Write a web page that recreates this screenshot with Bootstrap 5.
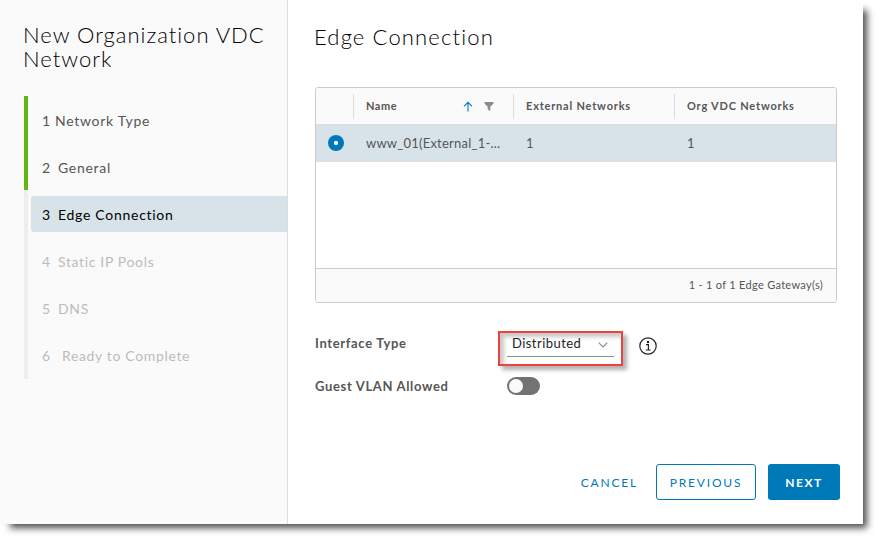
<!DOCTYPE html>
<html lang="en">
<head>
<meta charset="utf-8">
<meta name="viewport" content="width=device-width, initial-scale=1">
<title>New Organization VDC Network</title>
<link href="https://cdn.jsdelivr.net/npm/bootstrap@5.3.0/dist/css/bootstrap.min.css" rel="stylesheet">
<style>
body{font-family:Lato,"Open Sans",sans-serif;font-size:13px;line-height:20px;color:#565656;background:#fff;min-height:539px}
.wizard{width:863px;height:524px;background:#fff;box-shadow:7px 7px 7px -3px rgba(0,0,0,.7)}
.side{width:288px;background:#fafafa;border-right:1px solid #ddd;padding:23px 0 0 23px}
.side-title{font-size:22px;line-height:24px;font-weight:300;color:#000;letter-spacing:1px;height:73px;margin:0}
.track{width:4px;height:283px;background:#eee;margin-left:1px}
.track-done{height:94px;background:#60b515}
.steps{padding:6px 0 0 3px}
.step{height:36px;margin-bottom:11px;padding:2px 0 0 11px;font-size:14px;letter-spacing:.72px;color:#565656;border-radius:3px 0 0 3px}
.step.current{background:#d8e3e9;color:#000}
.step.todo{color:#bcbcbc;letter-spacing:.65px}
.num{width:16px}
.pane{padding:23px 23px 0 27px}
.pane-title{font-size:22px;line-height:27px;font-weight:300;color:#000;letter-spacing:1.15px;margin:0 0 37px -1px}
.grid{width:522px;height:216px;border:1px solid #ccc;border-radius:3px;overflow:hidden}
.grid-head{height:37px;background:#fafafa;border-bottom:1px solid #ddd;font-size:11px;font-weight:700;letter-spacing:.8px}
.grid-row{height:37px;background:#d8e3e9;border-bottom:1px solid #ddd;letter-spacing:.22px}
.c0{width:37px}.c1{width:160px}.c2{width:161px}
.cell{padding-left:12px}
.grid-head .cell{height:25px;border-left:1px solid #ddd}
.grid-row .cell{padding:0 0 1px 13px}
.pick{width:16px;height:16px;border-radius:50%;background:radial-gradient(circle,#fff 1.7px,#0079b8 2.5px)}
.grid-foot{height:34px;border-top:1px solid #ccc;background:#fafafa;font-size:11px;letter-spacing:.3px;padding:0 13px 1px 0}
.form-line .lbl{width:184px;font-weight:700;letter-spacing:.65px}
.callout{width:125px;height:35px;border:2px solid #f04040;padding:0 7px;margin-left:-1px;box-shadow:4px 4px 4px rgba(0,0,0,.3),inset 4px 4px 4px rgba(0,0,0,.22)}
.pick-list{height:24px;border-bottom:1px solid #8c8c8c;padding:0 6px 0 5px;color:#222;letter-spacing:.45px}
.toggle{width:33px;height:18px;border-radius:9px;background:#737373;padding:2px}
.knob{width:14px;height:14px;border-radius:50%;background:#fafafa}
.wiz-btn{height:36px;border-radius:3px;font-size:12px;letter-spacing:1.8px;padding:1px 0 0;color:#0079b8;line-height:34px}
.wiz-btn.main{background:#0079b8;color:#fff;font-weight:700;width:72px;letter-spacing:1.5px}
.wiz-btn.alt{border-color:#0079b8;width:100px}
</style>
<script src="https://cdn.jsdelivr.net/npm/bootstrap@5.3.0/dist/js/bootstrap.bundle.min.js"></script>
</head>
<body>
<main class="wizard d-flex">
  <aside class="side flex-shrink-0">
    <h1 class="side-title">New Organization VDC<br>Network</h1>
    <div class="d-flex">
      <div class="track flex-shrink-0"><div class="track-done"></div></div>
      <nav class="steps flex-grow-1">
        <div class="step d-flex align-items-center"><span class="num" style="width:13px">1</span><span>Network Type</span></div>
        <div class="step d-flex align-items-center"><span class="num">2</span><span>General</span></div>
        <div class="step current d-flex align-items-center"><span class="num">3</span><span>Edge Connection</span></div>
        <div class="step todo d-flex align-items-center"><span class="num">4</span><span>Static IP Pools</span></div>
        <div class="step todo d-flex align-items-center"><span class="num">5</span><span>DNS</span></div>
        <div class="step todo d-flex align-items-center"><span class="num" style="width:20px">6</span><span>Ready to Complete</span></div>
      </nav>
    </div>
  </aside>
  <section class="pane flex-grow-1">
    <h2 class="pane-title">Edge Connection</h2>
    <div class="grid d-flex flex-column">
      <div class="grid-head d-flex align-items-center">
        <div class="c0"></div>
        <div class="c1 cell d-flex align-items-center">
          <span style="letter-spacing:.5px">Name</span>
          <svg class="ms-auto" width="10" height="11" viewBox="0 0 10 11" fill="none" stroke="#0079b8" stroke-width="1.1"><path d="M5 10.500V1.500M1 5.300L5 1.300L9 5.300"/></svg>
          <svg width="10" height="9" viewBox="0 0 10 9" style="margin:0 19px 0 11px" fill="#8c8c8c"><path d="M.5 0h9v1.500L6.300 4.700V9L3.700 7.500V4.700L.5 1.500z"/></svg>
        </div>
        <div class="c2 cell d-flex align-items-center">External Networks</div>
        <div class="cell d-flex align-items-center">Org VDC Networks</div>
      </div>
      <div class="grid-row d-flex align-items-center">
        <div class="c0 d-flex ps-2"><span class="pick ms-1"></span></div>
        <div class="c1 cell">www_01(External_1-...</div>
        <div class="c2 cell">1</div>
        <div class="cell">1</div>
      </div>
      <div class="flex-grow-1"></div>
      <div class="grid-foot d-flex align-items-center justify-content-end">1 - 1 of 1 Edge Gateway(s)</div>
    </div>
    <div class="form-line d-flex" style="margin-top:28px">
      <div class="lbl" style="padding-top:2px">Interface Type</div>
      <div class="callout">
        <div class="pick-list d-flex align-items-center justify-content-between"><span class="pb-1">Distributed</span>
          <svg width="10" height="6" viewBox="0 0 10 6" fill="none" stroke="#8c8c8c" stroke-width="1.2"><path d="M.7 .7L5 5L9.300 .7"/></svg>
        </div>
      </div>
      <svg width="18" height="18" viewBox="0 0 18 18" style="margin:6px 0 0 16px" fill="none" stroke="#222" stroke-width="1.2"><circle cx="9" cy="9" r="8.200"/><path d="M7 7.700h2.400v5.300M6.700 13h5"/><circle cx="9" cy="5" r=".6" fill="#222"/></svg>
    </div>
    <div class="form-line d-flex align-items-center" style="margin-top:10px">
      <div class="lbl me-2">Guest VLAN Allowed</div>
      <div class="toggle"><div class="knob"></div></div>
    </div>
    <div class="d-flex justify-content-end" style="margin-top:68px">
      <button class="btn wiz-btn" style="margin-right:17px">CANCEL</button>
      <button class="btn wiz-btn alt" style="margin-right:12px">PREVIOUS</button>
      <button class="btn wiz-btn main">NEXT</button>
    </div>
  </section>
</main>
</body>
</html>
